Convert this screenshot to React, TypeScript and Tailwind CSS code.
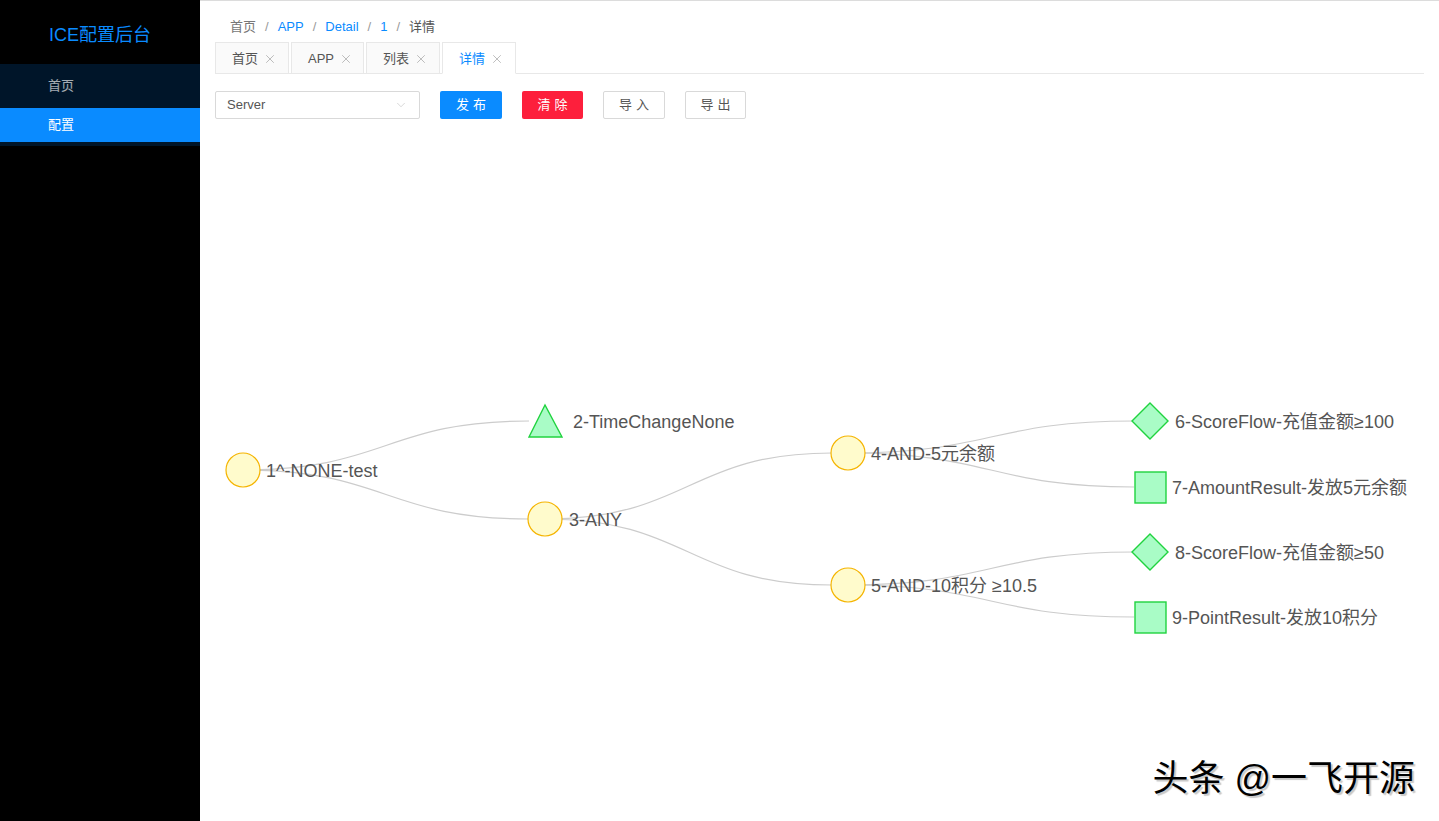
import { ChevronDown, X } from "lucide-react";

const font = "font-['Liberation_Sans','Noto_Sans_CJK_SC',sans-serif]";

type Shape = "circle" | "triangle" | "diamond" | "square";

type TreeNode = {
  id: number;
  x: number;
  y: number;
  shape: Shape;
  label: string;
  labelX: number;
  parent?: number;
};

const nodes: TreeNode[] = [
  { id: 1, x: 243, y: 470, shape: "circle", label: "1^-NONE-test", labelX: 266 },
  { id: 2, x: 545, y: 421, shape: "triangle", label: "2-TimeChangeNone", labelX: 573, parent: 1 },
  { id: 3, x: 545, y: 519, shape: "circle", label: "3-ANY", labelX: 569, parent: 1 },
  { id: 4, x: 848, y: 453, shape: "circle", label: "4-AND-5元余额", labelX: 871, parent: 3 },
  { id: 5, x: 848, y: 585, shape: "circle", label: "5-AND-10积分 ≥10.5", labelX: 871, parent: 3 },
  { id: 6, x: 1150, y: 421, shape: "diamond", label: "6-ScoreFlow-充值金额≥100", labelX: 1175, parent: 4 },
  { id: 7, x: 1150, y: 487, shape: "square", label: "7-AmountResult-发放5元余额", labelX: 1172, parent: 4 },
  { id: 8, x: 1150, y: 552, shape: "diamond", label: "8-ScoreFlow-充值金额≥50", labelX: 1175, parent: 5 },
  { id: 9, x: 1150, y: 617, shape: "square", label: "9-PointResult-发放10积分", labelX: 1172, parent: 5 },
];

const tabs = [
  { name: "首页", w: "w-[74px]" },
  { name: "APP", w: "w-[73px]" },
  { name: "列表", w: "w-[74px]" },
  { name: "详情", w: "w-[74px]", active: true },
];

function NodeShape({ node }: { node: TreeNode }) {
  const { x, y } = node;
  if (node.shape === "circle") {
    return <circle cx={x} cy={y} r={17} fill="#fffbcc" stroke="#f5b400" strokeWidth={1.2} />;
  }
  if (node.shape === "triangle") {
    return (
      <polygon
        points={`${x},${y - 16} ${x - 16},${y + 16} ${x + 17},${y + 16}`}
        fill="#a9fcc6"
        stroke="#20d33f"
        strokeWidth={1.4}
      />
    );
  }
  if (node.shape === "diamond") {
    return (
      <polygon
        points={`${x},${y - 18} ${x + 18},${y} ${x},${y + 18} ${x - 18},${y}`}
        fill="#a9fcc6"
        stroke="#20d33f"
        strokeWidth={1.4}
      />
    );
  }
  return <rect x={x - 15} y={y - 15} width={31} height={31} fill="#a9fcc6" stroke="#20d33f" strokeWidth={1.4} />;
}

function TreeGraph() {
  return (
    <svg className="block h-full w-full overflow-visible">
      <g transform="translate(-215,-118)">
        {nodes
          .filter((n) => n.parent)
          .map((n) => {
            const p = nodes.find((m) => m.id === n.parent)!;
            const x1 = n.x - 16;
            const mx = (p.x + x1) / 2;
            return (
              <path
                key={`e-${n.id}`}
                d={`M${p.x},${p.y} C${mx},${p.y} ${mx},${n.y} ${x1},${n.y}`}
                fill="none"
                stroke="#cccccc"
                strokeWidth={1.2}
              />
            );
          })}
        {nodes.map((n) => (
          <NodeShape key={`n-${n.id}`} node={n} />
        ))}
        {nodes.map((n) => (
          <text
            key={`t-${n.id}`}
            x={n.labelX}
            y={n.y + 1}
            dominantBaseline="central"
            fontSize={18}
            fill="#555555"
            fontFamily="'Liberation Sans','Noto Sans CJK SC',sans-serif"
          >
            {n.label}
          </text>
        ))}
      </g>
    </svg>
  );
}

export default function App() {
  return (
    <div className={`flex h-screen w-full overflow-hidden bg-white ${font}`}>
      <aside className="flex w-[200px] shrink-0 flex-col bg-black">
        <div className="flex h-[64px] items-center justify-center pt-[6px] text-[18px] text-[#0a8bff]">ICE配置后台</div>
        <nav className="bg-[#001529] pb-[4px]">
          <div className="flex h-[44px] items-center pl-[48px] text-[13px] text-white/65">首页</div>
          <div className="flex h-[34px] items-center bg-[#0a8bff] pl-[48px] text-[13px] text-white">配置</div>
        </nav>
      </aside>

      <main className="relative flex flex-1 flex-col border-t border-[#dcdcdc] px-[15px]">
        <div className="mt-[16px] flex h-[20px] items-center gap-[9px] pl-[15px] text-[13px]">
          <span className="text-[#777]">首页</span>
          <span className="text-[#999]">/</span>
          <span className="text-[#0a8bff]">APP</span>
          <span className="text-[#999]">/</span>
          <span className="text-[#0a8bff]">Detail</span>
          <span className="text-[#999]">/</span>
          <span className="text-[#0a8bff]">1</span>
          <span className="text-[#999]">/</span>
          <span className="text-[#555]">详情</span>
        </div>

        <div className="mt-[5px] flex h-[32px] items-end gap-[2px] border-b border-[#e8e8e8]">
          {tabs.map((t) => (
            <div
              key={t.name}
              className={`-mb-px flex h-[32px] ${t.w} items-center gap-[5px] border border-[#e8e8e8] pl-[16px] pt-[1px] text-[13px] ${
                t.active ? "border-b-white bg-white text-[#0a8bff]" : "bg-[#fafafa] text-[#555]"
              }`}
            >
              <span>{t.name}</span>
              <X size={14} strokeWidth={1.1} className="text-[#999]" />
            </div>
          ))}
        </div>

        <div className="mt-[16px] flex h-[28px] items-center gap-[20px] pt-[1px]">
          <div className="flex h-[28px] w-[205px] items-center justify-between rounded-[2px] border border-[#d9d9d9] pl-[11px] pr-[11px] text-[13px] text-[#555]">
            <span>Server</span>
            <ChevronDown size={14} strokeWidth={1} className="text-[#bbb]" />
          </div>
          <button className="flex h-[28px] w-[62px] items-center justify-center rounded-[2px] bg-[#0a8bff] pl-[4px] text-[13px] tracking-[0.3em] text-white">
            发布
          </button>
          <button className="flex h-[28px] w-[61px] items-center justify-center rounded-[2px] bg-[#fd1f3c] pl-[4px] text-[13px] tracking-[0.3em] text-white">
            清除
          </button>
          <button className="flex h-[28px] w-[62px] items-center justify-center rounded-[2px] border border-[#d9d9d9] bg-white pl-[4px] text-[13px] tracking-[0.3em] text-[#555]">
            导入
          </button>
          <button className="flex h-[28px] w-[61px] items-center justify-center rounded-[2px] border border-[#d9d9d9] bg-white pl-[4px] text-[13px] tracking-[0.3em] text-[#555]">
            导出
          </button>
        </div>

        <div className="flex-1">
          <TreeGraph />
        </div>

        <div className="absolute bottom-[24px] right-[24px] text-[36px] leading-none text-black [text-shadow:2px_2px_1px_rgba(0,0,0,0.22)]">
          头条 @一飞开源
        </div>
      </main>
    </div>
  );
}
